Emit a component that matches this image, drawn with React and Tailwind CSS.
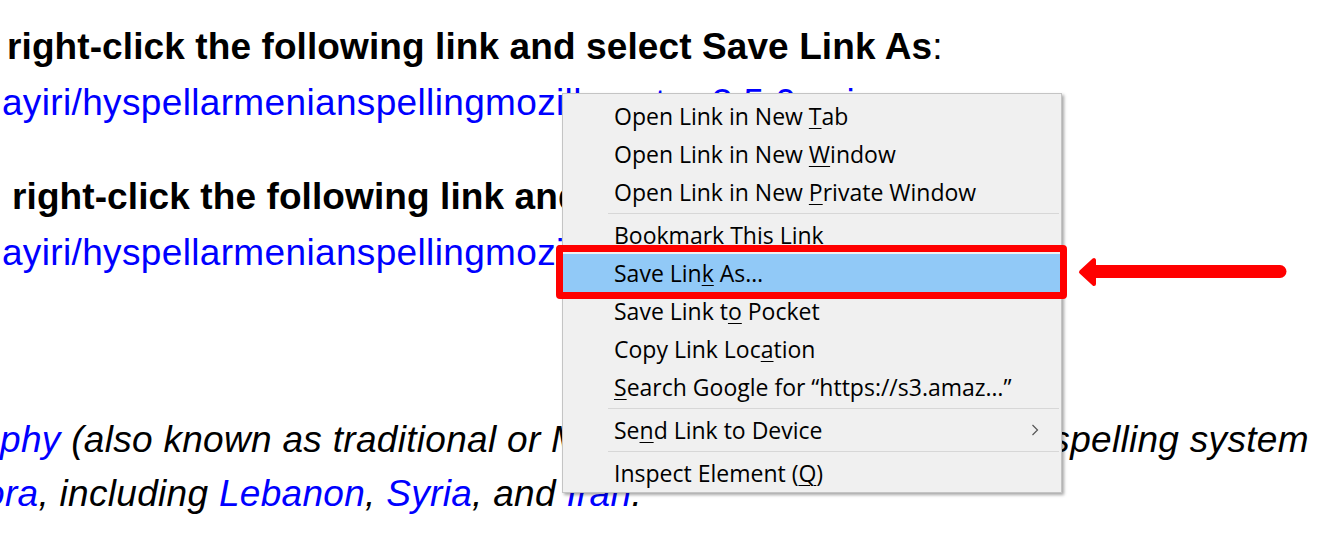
import React from "react";

const U = ({ children }) => (
  <span className="underline decoration-1 underline-offset-[3px]">{children}</span>
);

function Item({ children, highlight, sub }) {
  return (
    <div
      className={
        "relative h-[38px] flex items-center pl-[51px] whitespace-nowrap " +
        (highlight ? "bg-[#91c9f7]" : "")
      }
    >
      <span>{children}</span>
      {sub && (
        <svg
          className="absolute right-[22px] top-[13px]"
          width="8"
          height="12"
          viewBox="0 0 8 12"
        >
          <path d="M1.5 1 L6.5 6 L1.5 11" fill="none" stroke="#555" strokeWidth="1.2" />
        </svg>
      )}
    </div>
  );
}

function Sep() {
  return (
    <div className="h-[5px] flex items-center pl-[45px] pr-[2px]">
      <div className="h-px w-full bg-[#d7d7d7]" />
    </div>
  );
}

export default function App() {
  return (
    <div
      className="relative w-[1333px] h-[552px] overflow-hidden bg-white text-black"
      style={{ fontFamily: '"Liberation Sans", Arial, sans-serif' }}
    >
      <div className="pt-[19px] text-[37px]">
        <p className="leading-[56px] whitespace-nowrap font-bold pl-[7px] tracking-[0.1px]">
          right-click the following link and select Save Link As<span className="font-normal">:</span>
        </p>
        <p className="leading-[56px] whitespace-nowrap ml-[-19px] text-[#0000ff] tracking-[0.35px]">
          nayiri/hyspellarmenianspellingmozilla-extor-3.5.0.xpi
        </p>
        <p className="mt-[38px] leading-[56px] whitespace-nowrap font-bold pl-[12px] tracking-[0.1px]">
          right-click the following link and select Save Link As:
        </p>
        <p className="leading-[56px] whitespace-nowrap ml-[-19px] text-[#0000ff] tracking-[0.35px]">
          nayiri/hyspellarmenianspellingmozilla-extor-3.5.0.xpi
        </p>
        <div className="mt-[132px] italic leading-[54px] whitespace-nowrap tracking-[0.3px]">
          <p>
            <span className="text-[#0000ff]">phy</span> (also known as traditional or Mesropian orthography) is an spelling system
          </p>
          <p className="ml-[-16px]">
            <span className="text-[#0000ff]">ora</span>, including <span className="text-[#0000ff]">Lebanon</span>,{" "}
            <span className="text-[#0000ff]">Syria</span>, and <span className="text-[#0000ff]">Iran</span>.
          </p>
        </div>
      </div>

      {/* context menu */}
      <div
        className="absolute left-[562px] top-[93px] w-[500px] border border-[#c4c4c4] bg-[#f0f0f0] pt-[3px] shadow-[2px_2px_3px_rgba(0,0,0,0.35)] text-[23px] text-black"
        style={{ fontFamily: '"Open Sans", "Noto Sans", sans-serif' }}
      >
        <Item>Open Link in New <U>T</U>ab</Item>
        <Item>Open Link in New <U>W</U>indow</Item>
        <Item>Open Link in New <U>P</U>rivate Window</Item>
        <Sep />
        <Item>Bookmark This Link</Item>
        <Item highlight>Save Lin<U>k</U> As…</Item>
        <Item>Save Link t<U>o</U> Pocket</Item>
        <Item>Copy Link Loc<U>a</U>tion</Item>
        <Item><U>S</U>earch Google for “https://s3.amaz…”</Item>
        <Sep />
        <Item sub>Se<U>n</U>d Link to Device</Item>
        <Sep />
        <Item>Inspect Element (<U>Q</U>)</Item>
      </div>

      {/* red highlight box */}
      <div className="absolute left-[556px] top-[245px] w-[511px] h-[54px] border-[7px] border-[#ff0000] rounded-[4px]" />

      {/* red arrow */}
      <svg
        className="absolute left-[1070px] top-[250px]"
        width="230"
        height="45"
        viewBox="1070 250 230 45"
      >
        <line x1="1094" y1="271.5" x2="1280" y2="271.5" stroke="#ff0000" strokeWidth="13" strokeLinecap="round" />
        <path
          d="M1081 272 L1094 260 L1094 284 Z"
          fill="#ff0000"
          stroke="#ff0000"
          strokeWidth="4"
          strokeLinejoin="round"
        />
      </svg>
    </div>
  );
}
